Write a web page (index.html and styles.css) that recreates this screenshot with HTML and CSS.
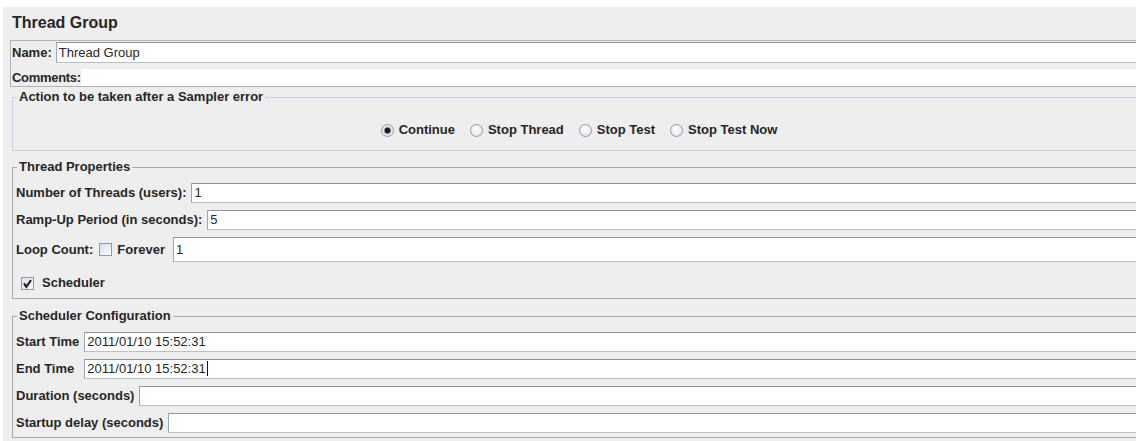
FILE: index.html
```html
<!DOCTYPE html>
<html lang="en">
<head>
<meta charset="utf-8">
<title>Thread Group</title>
<link rel="stylesheet" href="styles.css">
</head>
<body>
<div class="panel">
  <h1 class="title">Thread Group</h1>

  <div class="namebox">
    <div class="row name-row">
      <span class="lbl">Name:</span>
      <div class="field">Thread Group</div>
    </div>
    <div class="row comments-row">
      <span class="lbl">Comments:</span>
      <div class="area"></div>
    </div>
  </div>

  <fieldset class="group group-action">
    <legend>Action to be taken after a Sampler error</legend>
    <div class="radios">
      <label class="radio"><span class="dot on"></span>Continue</label>
      <label class="radio"><span class="dot"></span>Stop Thread</label>
      <label class="radio"><span class="dot"></span>Stop Test</label>
      <label class="radio"><span class="dot"></span>Stop Test Now</label>
    </div>
  </fieldset>

  <fieldset class="group group-threads">
    <legend>Thread Properties</legend>
    <div class="row form-row">
      <span class="lbl">Number of Threads (users):</span>
      <div class="field">1</div>
    </div>
    <div class="row form-row">
      <span class="lbl">Ramp-Up Period (in seconds):</span>
      <div class="field">5</div>
    </div>
    <div class="row form-row loop-row">
      <span class="lbl">Loop Count:</span>
      <span class="check"></span>
      <span class="lbl forever">Forever</span>
      <div class="field tall">1</div>
    </div>
    <div class="row sched-row">
      <span class="check checked">
        <svg width="11" height="11" viewBox="0 0 11 11"><path d="M2 5.4 L4.3 8.8 L9 2.2" fill="none" stroke="#1f1f1f" stroke-width="2.1" stroke-linejoin="miter"/></svg>
      </span>
      <span class="lbl">Scheduler</span>
    </div>
  </fieldset>

  <fieldset class="group group-sched">
    <legend>Scheduler Configuration</legend>
    <div class="time-grid">
      <span class="lbl">Start Time</span>
      <div class="field">2011/01/10 15:52:31</div>
      <span class="lbl">End Time</span>
      <div class="field">2011/01/10 15:52:31<span class="caret"></span></div>
    </div>
    <div class="row form-row">
      <span class="lbl">Duration (seconds)</span>
      <div class="field"></div>
    </div>
    <div class="row form-row">
      <span class="lbl">Startup delay (seconds)</span>
      <div class="field"></div>
    </div>
  </fieldset>
</div>
</body>
</html>
```

FILE: styles.css
```css
html, body {
  margin: 0;
  overflow: hidden;
  background: #ffffff;
}

body {
  padding: 7px 0 0 3px;
  font-family: "Liberation Sans", Arial, sans-serif;
  color: #262626;
}

.panel {
  box-sizing: border-box;
  width: 1140px;
  min-height: 440px;
  background: #eeeeee;
  padding: 0 0 10px 7px;
}

.title {
  margin: 0 0 7px 2px;
  padding-top: 6px;
  font-size: 16px;
  font-weight: bold;
  line-height: 20px;
}

.row {
  display: flex;
  align-items: center;
  gap: 5px;
}

.lbl {
  font-size: 13px;
  font-weight: bold;
  line-height: 16px;
  white-space: nowrap;
}

/* text fields */
.field {
  flex: 1;
  box-sizing: border-box;
  height: 20px;
  background: #ffffff;
  border: 1px solid #b7c0cb;
  border-top-color: #8a95a3;
  border-left-color: #9ba6b3;
  padding-left: 2px;
  font-size: 13px;
  line-height: 18px;
  white-space: nowrap;
}

.field.tall {
  height: 25px;
  line-height: 23px;
}

.caret {
  display: inline-block;
  width: 1px;
  height: 15px;
  margin-left: 1px;
  background: #111;
  vertical-align: -3px;
}

/* name / comments box */
.namebox {
  border: 1px solid #b3b3b3;
  padding: 1px 0 0 1px;
}

.name-row {
  gap: 4px;
}

.name-row .field {
  height: 21px;
  line-height: 19px;
}

.comments-row {
  margin-top: 6px;
  gap: 0;
}

.comments-row .lbl {
  letter-spacing: -0.3px;
}

.area {
  flex: 1;
  height: 17px;
  background: #ffffff;
}

/* titled groups */
.group {
  margin: 0 0 0 2px;
  border: 1px solid #a9a9a9;
  padding: 9px 0 2px 3px;
  min-width: 0;
}

.group legend {
  margin-left: 1px;
  padding: 0 2px;
  font-size: 13px;
  font-weight: bold;
  line-height: 14px;
}

.group-action {
  margin-top: 3px;
  border-color: #c4d4e4;
  padding-top: 18px;
  padding-bottom: 12px;
}

.group-threads {
  margin-top: 9px;
}

.group-sched {
  margin-top: 10px;
  padding-bottom: 4px;
}

.form-row + .form-row {
  margin-top: 7px;
}

/* radio buttons */
.radios {
  display: flex;
  justify-content: center;
  gap: 15px;
  height: 16px;
  align-items: center;
}

.radio {
  display: flex;
  align-items: center;
  gap: 5px;
  font-size: 13px;
  font-weight: bold;
  line-height: 16px;
}

.dot {
  box-sizing: border-box;
  width: 13px;
  height: 13px;
  border-radius: 50%;
  border: 1px solid #8d9bac;
  background: radial-gradient(circle at 45% 40%, #ffffff 0, #eef1f5 45%, #d3dbe4 100%);
}

.dot.on {
  background: radial-gradient(circle, #1b1b1b 0 2.6px, #9aa7b6 3.2px, #e4e9ef 4.2px, #f7f9fb 100%);
}

/* check boxes */
.check {
  box-sizing: border-box;
  display: inline-flex;
  align-items: center;
  justify-content: center;
  width: 13px;
  height: 13px;
  border: 1px solid #8c9aab;
  background: linear-gradient(135deg, #d8e0e8 0%, #eef2f6 60%, #fbfcfd 100%);
}

.loop-row .check {
  margin-left: 1px;
}

.loop-row .field {
  margin-left: 3px;
}

.sched-row {
  height: 26px;
  margin-top: 8px;
  padding-left: 5px;
  gap: 8px;
}

/* start / end time share a label column */
.time-grid {
  display: grid;
  grid-template-columns: auto 1fr;
  column-gap: 5px;
  row-gap: 7px;
  align-items: center;
  margin-bottom: 7px;
}
```
